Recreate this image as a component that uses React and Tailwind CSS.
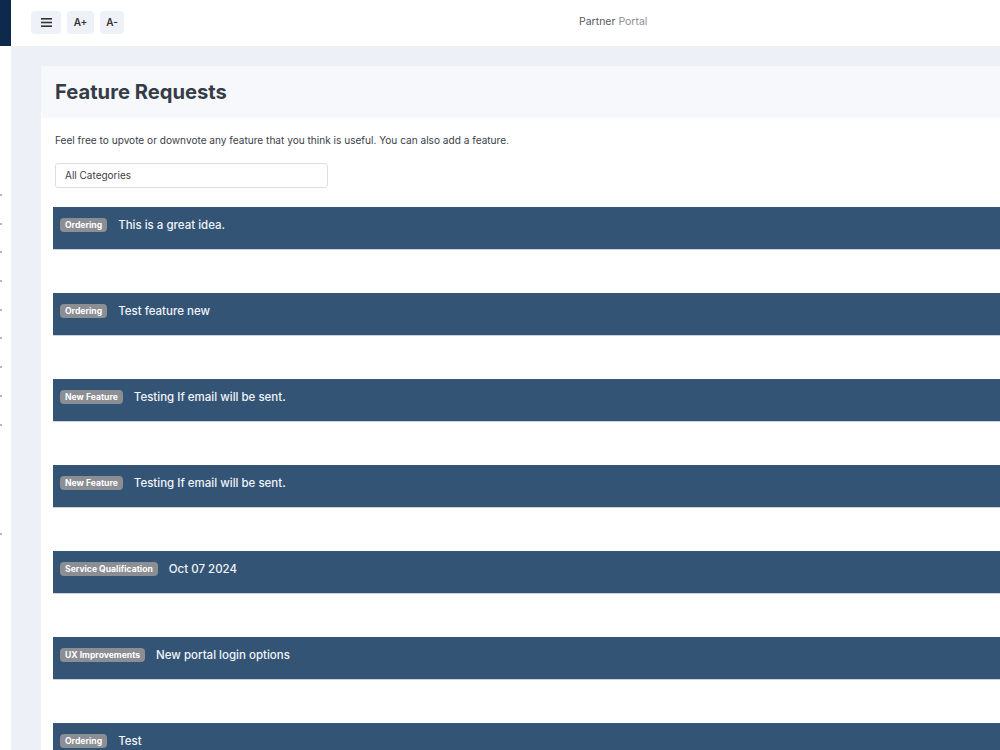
import React from 'react';

const requests = [
  { tag: 'Ordering', title: 'This is a great idea.' },
  { tag: 'Ordering', title: 'Test feature new' },
  { tag: 'New Feature', title: 'Testing If email will be sent.' },
  { tag: 'New Feature', title: 'Testing If email will be sent.' },
  { tag: 'Service Qualification', title: 'Oct 07 2024' },
  { tag: 'UX Improvements', title: 'New portal login options' },
  { tag: 'Ordering', title: 'Test' },
];

function Sidebar() {
  return (
    <div className="w-[11px] shrink-0 bg-white flex flex-col">
      <div className="h-[46px] bg-[#0d2a4c]" />
      <div className="flex flex-col gap-[26.7px] pt-[148px]">
        {[...Array(9)].map((_, i) => (
          <div key={i} className="w-[2px] h-[2px] rounded-full bg-[#9aa0a8]" />
        ))}
        <div className="w-[2px] h-[2px] rounded-full bg-[#9aa0a8] mt-[81px]" />
      </div>
    </div>
  );
}

function RequestItem({ tag, title }) {
  return (
    <div className="mb-[43px]">
      <div className="h-[43px] bg-[#345476] border-b border-[#c9d2de] flex items-start pt-[11px] pl-[7px] gap-[11px]">
        <span className="h-[14px] px-[5px] rounded-[4px] bg-[#8b8e93] text-white text-[8.6px] font-bold leading-[14px]">
          {tag}
        </span>
        <span className="text-[11.5px] font-medium text-[#f1f4f8] leading-[14px]">{title}</span>
      </div>
    </div>
  );
}

export default function App() {
  return (
    <div className="flex h-[750px] w-[1000px] overflow-hidden font-['Inter','Noto_Sans',sans-serif]">
      <Sidebar />
      <div className="flex-1 flex flex-col bg-[#edf0f6] min-w-0">
        <div className="h-[46px] shrink-0 bg-white flex items-center pl-[20px] relative">
          <div className="flex gap-[6px] -mt-[2px]">
            <button className="w-[30px] h-[23px] rounded-[4px] bg-[#eef1f7] flex items-center justify-center">
              <svg width="11" height="9" viewBox="0 0 11 9">
                <rect x="0" y="0" width="11" height="1.6" fill="#333" />
                <rect x="0" y="3.7" width="11" height="1.6" fill="#333" />
                <rect x="0" y="7.4" width="11" height="1.6" fill="#333" />
              </svg>
            </button>
            <button className="w-[27px] h-[23px] rounded-[4px] bg-[#eef1f7] text-[10px] font-semibold text-[#333]">A+</button>
            <button className="w-[24px] h-[23px] rounded-[4px] bg-[#eef1f7] text-[10px] font-semibold text-[#333]">A-</button>
          </div>
          <div className="absolute left-[568px] top-[14px] text-[10.5px]">
            <span className="text-[#555b62]">Partner</span>{' '}
            <span className="text-[#8a8f96]">Portal</span>
          </div>
        </div>
        <div className="pt-[20px] pl-[30px]">
          <div className="w-[1000px] bg-white rounded-tl-[3px]">
            <div className="h-[52px] bg-[#f7f8fc] flex items-center pl-[14px]">
              <h1 className="text-[20.2px] font-bold text-[#343c45]">Feature Requests</h1>
            </div>
            <div className="px-[12px] pt-[15px]">
              <p className="pl-[2px] text-[10.1px] text-[#3b4148]">
                Feel free to upvote or downvote any feature that you think is useful. You can also add a feature.
              </p>
              <div className="ml-[2px] mt-[15px] w-[273px] h-[25px] border border-[#dcdfe6] rounded-[3px] flex items-center pl-[9px] text-[10px] text-[#3b4148]">
                All Categories
              </div>
              <div className="mt-[19px]">
                {requests.map((r, i) => (
                  <RequestItem key={i} {...r} />
                ))}
              </div>
            </div>
          </div>
        </div>
      </div>
    </div>
  );
}
